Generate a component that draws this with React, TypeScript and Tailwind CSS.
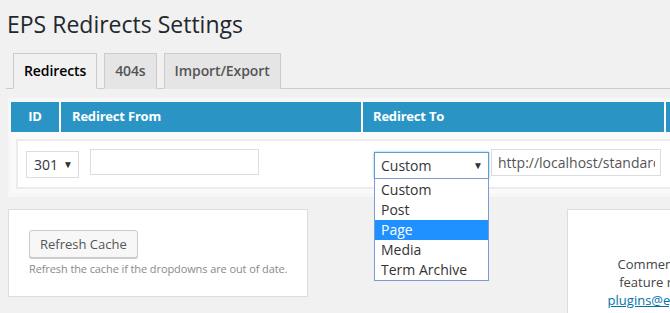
import React from 'react';

const font = { fontFamily: '"Open Sans", "Liberation Sans", sans-serif' };

const tabs = [
  { label: 'Redirects', active: true },
  { label: '404s', active: false },
  { label: 'Import/Export', active: false },
];

const redirectTypes = ['Custom', 'Post', 'Page', 'Media', 'Term Archive'];

function Tabs() {
  return (
    <div className="ml-[6px] mt-[14px] flex h-[36px] items-start gap-[7px] border-b border-[#ccc] pl-[7px]">
      {tabs.map((tab) => (
        <div
          key={tab.label}
          className={`-mb-px h-[36px] border border-[#ccc] px-[10px] py-[5px] text-[14px] font-semibold leading-[24px] tracking-[-0.1px] ${
            tab.active
              ? 'border-b-[#f1f1f1] bg-[#f1f1f1] text-black'
              : 'border-b-transparent bg-[#e5e5e5] text-[#555]'
          }`}
        >
          {tab.label}
        </div>
      ))}
    </div>
  );
}

function RedirectTable() {
  return (
    <div className="ml-[8px] mt-[9px] w-[760px] bg-[#f7f7f7] pb-[4px] pl-[3px] pt-[4px]">
      {/* header */}
      <div className="flex h-[30px] gap-[2px] bg-white text-[13px] font-bold tracking-[-0.2px] text-white">
        <div className="flex w-[48px] items-center justify-center bg-[#2a95c5]">ID</div>
        <div className="flex w-[300px] items-center bg-[#2a95c5] pl-[11px]">Redirect From</div>
        <div className="flex w-[301px] items-center bg-[#2a95c5] pl-[10px]">Redirect To</div>
        <div className="flex-1 bg-[#2a95c5]" />
      </div>

      {/* row */}
      <div className="bg-[#fafafa] pb-[4px] pl-[5px] pt-[7px]">
        <div className="relative flex h-[50px] items-start border-2 border-r-0 border-[#ececec] bg-white">
          <div className="ml-[8px] mt-[10px] flex h-[27px] w-[53px] items-center justify-between border border-[#ddd] bg-white pl-[7px] pr-[5px] text-[14px] text-[#32373c]">
            <span>301</span>
            <span className="text-[10px] text-[#333]">▼</span>
          </div>
          <div className="ml-[11px] mt-[8px] h-[26px] w-[169px] border border-[#ddd] bg-white" />

          <div className="relative ml-[115px] mt-[11px]">
            <div className="flex h-[27px] w-[115px] items-center justify-between border border-[#5b9dd9] bg-white pl-[6px] pr-[5px] text-[14px] text-[#32373c] shadow-[0_0_2px_rgba(30,140,190,0.6)]">
              <span>Custom</span>
              <span className="text-[10px] text-[#333]">▼</span>
            </div>
            <div className="absolute left-0 top-[26px] z-10 w-[115px] border border-[#7a9cd6] bg-white pt-px text-[14px] leading-[20px] text-[#333]">
              {redirectTypes.map((t) => (
                <div
                  key={t}
                  className={`h-[20px] pl-[6px] ${t === 'Page' ? 'bg-[#1e90ff] text-white' : ''}`}
                >
                  {t}
                </div>
              ))}
            </div>
          </div>

          <div className="ml-[2px] mt-[8px] flex h-[27px] w-[170px] items-center overflow-hidden whitespace-nowrap border border-[#ddd] bg-white pl-[6px] pr-[5px] text-[14px] text-[#555]">
            <span className="block w-[158px] overflow-hidden">http://localhost/standard</span>
          </div>
        </div>
      </div>
    </div>
  );
}

export default function App() {
  return (
    <div className="h-[313px] w-[670px] overflow-hidden bg-[#f1f1f1] text-[#444]" style={font}>
      <h1 className="pl-[7px] pt-[10px] text-[23px] font-normal leading-[29px] text-[#23282d]">
        EPS Redirects Settings
      </h1>
      <Tabs />
      <RedirectTable />

      <div className="mt-[12px] flex items-start">
        <div className="ml-[8px] h-[88px] w-[300px] shrink-0 border border-[#ddd] bg-white px-[20px] pt-[20px]">
          <button className="h-[28px] rounded-[3px] border border-[#ccc] bg-[#f7f7f7] px-[10px] pb-px text-[13px] leading-[26px] text-[#555] shadow-[0_1px_0_#ccc]">
            Refresh Cache
          </button>
          <p className="mt-[3px] whitespace-nowrap text-[11px] leading-[16px] tracking-[-0.1px] text-[#8a8a8a]">
            Refresh the cache if the dropdowns are out of date.
          </p>
        </div>

        <div className="ml-[259px] h-[120px] w-[250px] shrink-0 border border-[#ddd] bg-white pt-[45px] text-center text-[13px] leading-[18px] text-[#444]">
          Comments, questions or
          <br />
          feature requests sent to
          <br />
          <a className="text-[#0073aa] underline" href="#">
            plugins@eggplantstudios.ca
          </a>
        </div>
      </div>
    </div>
  );
}
